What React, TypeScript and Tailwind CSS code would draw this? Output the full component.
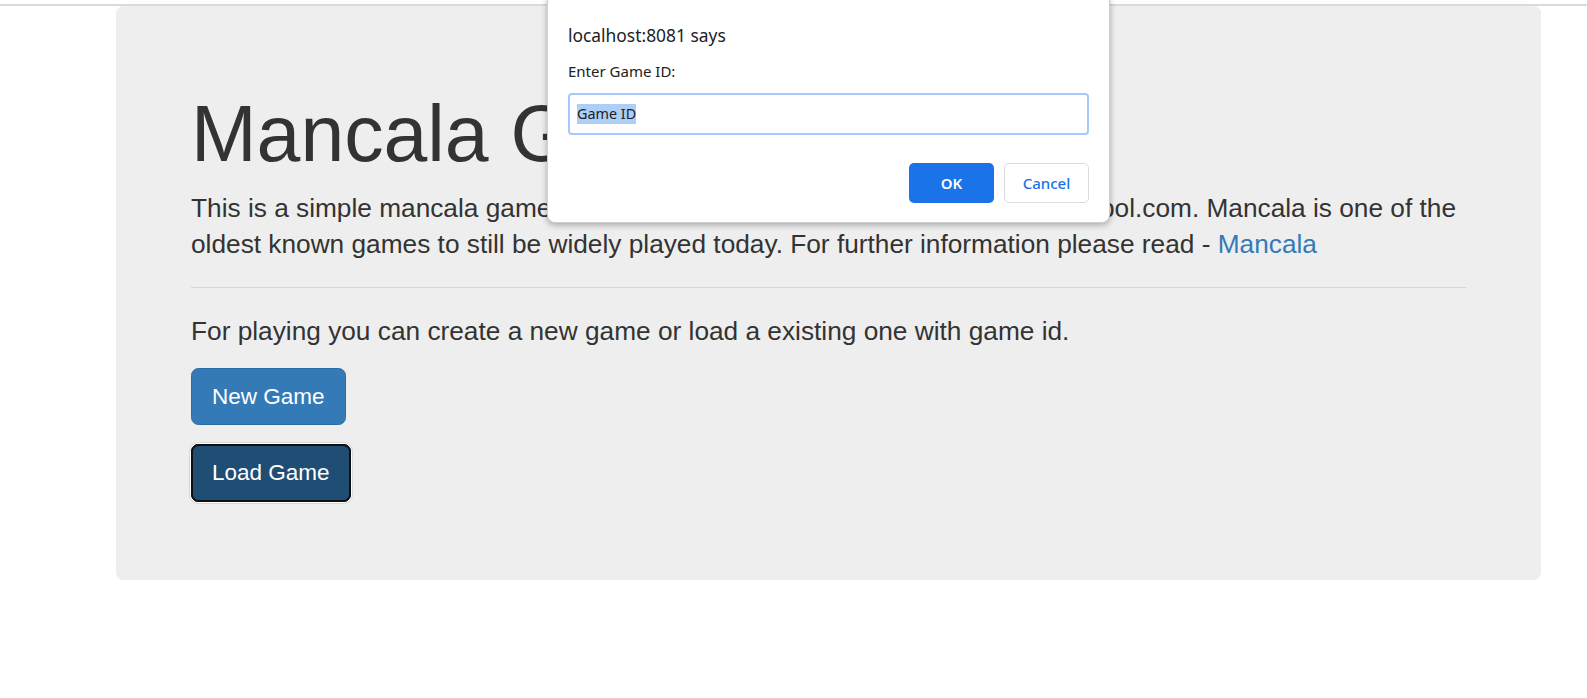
import React from "react";

export default function App() {
  return (
    <div className="relative min-h-[698px] bg-white text-[#333] font-['Liberation_Sans',Arial,sans-serif]">
      <div className="mt-[4px] h-[2px] bg-[#dadada]" />
      <div className="ml-[116px] w-[1425px] rounded-[7.5px] bg-[#eeeeee] px-[75px] pt-[60px] pb-[60px]">
        <h1 className="mt-[25px] mb-[12.5px] text-[78.75px] font-normal leading-[1.1]">Mancala Game</h1>
        <p className="mb-[25px] text-[26.25px] leading-[36px]">
          This is a simple mancala game implemented as a coding assignment case for bol.com. Mancala is one of the
          oldest known games to still be widely played today. For further information please read -{" "}
          <a href="#" className="text-[#337ab7]">Mancala</a>
        </p>
        <hr className="mb-[25px] border-t border-[#d5d5d5]" />
        <p className="mb-[18.75px] text-[26.25px] leading-[36px]">
          For playing you can create a new game or load a existing one with game id.
        </p>
        <p className="mb-[18.75px]">
          <button className="rounded-[7.5px] border border-[#2e6da4] bg-[#337ab7] px-[20px] py-[12.75px] text-[22.5px] leading-[30px] text-white">
            New Game
          </button>
        </p>
        <p className="mb-[18.75px]">
          <button className="rounded-[7.5px] border border-[#122b40] bg-[#204d74] px-[20px] py-[12.75px] text-[22.5px] leading-[30px] text-white outline-2 outline-offset-[-2px] outline-[#101010] shadow-[0_0_0_1px_#ffffff,0_0_0_2px_#d8d8d8]">
            Load Game
          </button>
        </p>
      </div>

      <div className="absolute left-[547px] top-[-10px] w-[563px] rounded-[8px] border border-[#cfcfcf] bg-white px-[20px] pt-[28px] pb-[19px] font-['Noto_Sans',sans-serif] shadow-[0_2px_6px_rgba(0,0,0,0.3)]">
        <div className="text-[17.4px] leading-[24px] text-[#202124]">localhost:8081 says</div>
        <div className="mt-[14px] text-[15px] leading-[20px] text-[#202124]">Enter Game ID:</div>
        <div className="mt-[12px] flex h-[41.5px] items-center rounded-[4px] border-2 border-[#a8c7fa] px-[7px]">
          <span className="bg-[#accef7] text-[14.4px] leading-[20px] text-[#202124]">Game ID</span>
        </div>
        <div className="mt-[28.5px] flex justify-end gap-[10px]">
          <button className="h-[40px] w-[85px] rounded-[5px] bg-[#1a73e8] text-[15px] font-semibold text-white">OK</button>
          <button className="h-[40px] w-[85px] rounded-[5px] border border-[#dadce0] bg-white text-[15px] font-medium text-[#1a73e8]">
            Cancel
          </button>
        </div>
      </div>
    </div>
  );
}
